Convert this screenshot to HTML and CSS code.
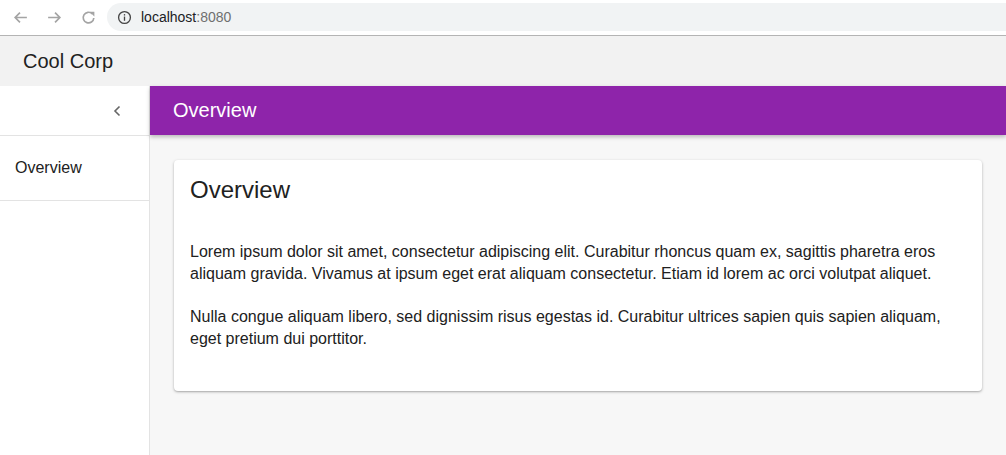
FILE: index.html
```html
<!DOCTYPE html>
<html>
<head>
<meta charset="utf-8">
<link rel="stylesheet" href="styles.css">
</head>
<body>
<div class="chrome">
  <div class="nav">
    <svg class="nav-icon" viewBox="0 0 16 16"><path d="M14 8H3M7.5 3.5L3 8l4.5 4.5" fill="none" stroke="currentColor" stroke-width="1.6"/></svg>
    <svg class="nav-icon" viewBox="0 0 16 16"><path d="M2 8h11M8.5 3.5L13 8l-4.5 4.5" fill="none" stroke="currentColor" stroke-width="1.6"/></svg>
    <svg class="nav-icon" viewBox="0 0 16 16"><path d="M13 8.5A5 5 0 1 1 11.5 4.5" fill="none" stroke="currentColor" stroke-width="1.6"/><path d="M9 2.5h4.5V7z" fill="currentColor"/></svg>
  </div>
  <div class="address">
    <svg class="info" viewBox="0 0 16 16"><circle cx="8" cy="8" r="6.3" fill="none" stroke="currentColor" stroke-width="1.4"/><rect x="7.3" y="7" width="1.4" height="4.5" fill="currentColor"/><rect x="7.3" y="4.4" width="1.4" height="1.5" fill="currentColor"/></svg>
    <span class="host">localhost</span><span class="port">:8080</span>
  </div>
</div>
<header class="topbar">Cool Corp</header>
<div class="layout">
  <aside class="sidebar">
    <div class="collapse">
      <svg class="chev" viewBox="0 0 8 12"><path d="M6.5 1.5L2 6l4.5 4.5" fill="none" stroke="currentColor" stroke-width="1.6"/></svg>
    </div>
    <div class="nav-item">Overview</div>
  </aside>
  <main class="main">
    <div class="page-header">Overview</div>
    <section class="card">
      <h2 class="card-title">Overview</h2>
      <p>Lorem ipsum dolor sit amet, consectetur adipiscing elit. Curabitur rhoncus quam ex, sagittis pharetra eros aliquam gravida. Vivamus at ipsum eget erat aliquam consectetur. Etiam id lorem ac orci volutpat aliquet.</p>
      <p>Nulla congue aliquam libero, sed dignissim risus egestas id. Curabitur ultrices sapien quis sapien aliquam, eget pretium dui porttitor.</p>
    </section>
  </main>
</div>
</body>
</html>
```
FILE: styles.css
```css
html, body {
  margin: 0;
  padding: 0;
  height: 100%;
}
body {
  font-family: "Liberation Sans", Arial, sans-serif;
  color: #212121;
  display: flex;
  flex-direction: column;
  background: #fff;
}
.chrome {
  height: 35px;
  border-bottom: 1px solid #b4b4b4;
  display: flex;
  align-items: center;
  background: #fff;
  flex: none;
}
.nav {
  display: flex;
  align-items: center;
  gap: 17px;
  padding-left: 12px;
  width: 95px;
  color: #a4a4a4;
}
.nav-icon {
  width: 17px;
  height: 17px;
}
.address {
  flex: 1;
  height: 28px;
  background: #f1f3f4;
  border-radius: 14px 0 0 14px;
  display: flex;
  align-items: center;
  padding-left: 10px;
  font-size: 14px;
  color: #202124;
  margin-top: -1px;
}
.info {
  width: 15px;
  height: 15px;
  color: #444;
  margin-right: 9px;
}
.port {
  color: #6f6f6f;
}
.topbar {
  height: 50px;
  background: #f2f2f2;
  display: flex;
  align-items: center;
  padding-left: 23px;
  font-size: 20px;
  color: #212121;
  flex: none;
}
.layout {
  flex: 1;
  display: flex;
  min-height: 0;
}
.sidebar {
  width: 149px;
  border-right: 1px solid #e3e3e3;
  background: #fff;
  flex: none;
}
.collapse {
  height: 49px;
  border-bottom: 1px solid #e3e3e3;
  display: flex;
  align-items: center;
  justify-content: flex-end;
  padding-right: 28px;
  color: #666;
}
.chev {
  width: 8px;
  height: 12px;
}
.nav-item {
  height: 64px;
  border-bottom: 1px solid #e3e3e3;
  display: flex;
  align-items: center;
  padding-left: 15px;
  font-size: 16px;
  color: #212121;
}
.main {
  flex: 1;
  background: #f7f7f7;
  display: flex;
  flex-direction: column;
}
.page-header {
  height: 49px;
  background: #8e24aa;
  color: #fff;
  font-size: 20px;
  display: flex;
  align-items: center;
  padding-left: 23px;
  box-shadow: 0 2px 4px rgba(0, 0, 0, 0.25);
  position: relative;
  z-index: 1;
}
.card {
  margin: 25px 24px 0 24px;
  background: #fff;
  border-radius: 4px;
  box-shadow: 0 1px 3px rgba(0, 0, 0, 0.28), 0 1px 1px rgba(0, 0, 0, 0.08);
  padding: 16px 16px 20px 16px;
}
.card-title {
  margin: 0 0 37px 0;
  font-size: 24px;
  font-weight: normal;
  line-height: 28px;
  color: #212121;
}
.card p {
  margin: 0 0 21px 0;
  font-size: 16px;
  line-height: 22px;
  color: #212121;
}
```
